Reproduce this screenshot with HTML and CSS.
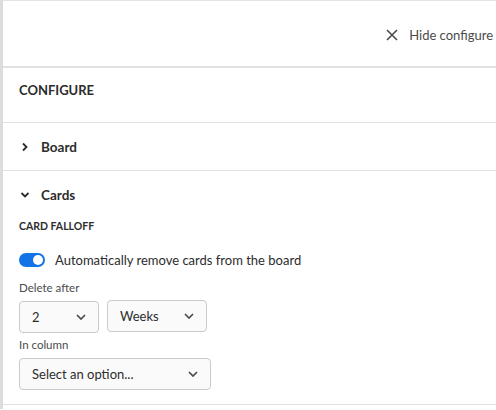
FILE: index.html
```html
<!DOCTYPE html>
<html>
<head>
<meta charset="utf-8">
<link rel="stylesheet" href="styles.css">
</head>
<body>
<div class="panel">
  <div class="header">
    <button class="hide-btn">
      <svg class="x-icon" width="12" height="12" viewBox="0 0 12 12"><path d="M1 1 L11 11 M11 1 L1 11" stroke="#4b4b4b" stroke-width="1.6" fill="none"/></svg>
      <span>Hide configure</span>
    </button>
  </div>
  <div class="title-row">CONFIGURE</div>
  <div class="section">
    <div class="section-head">
      <svg class="chev" width="10" height="10" viewBox="0 0 10 10"><path d="M3 1.5 L6.5 5 L3 8.5" stroke="#2c2c2c" stroke-width="1.8" fill="none"/></svg>
      <span>Board</span>
    </div>
  </div>
  <div class="section open">
    <div class="section-head">
      <svg class="chev" width="10" height="10" viewBox="0 0 10 10"><path d="M1.5 3 L5 6.5 L8.5 3" stroke="#2c2c2c" stroke-width="1.8" fill="none"/></svg>
      <span>Cards</span>
    </div>
    <div class="section-body">
      <div class="subhead">CARD FALLOFF</div>
      <label class="switch-row">
        <span class="switch"><span class="knob"></span></span>
        <span>Automatically remove cards from the board</span>
      </label>
      <div class="field-label">Delete after</div>
      <div class="select-row">
        <div class="select s-num"><span>2</span><svg width="10" height="6" viewBox="0 0 10 6"><path d="M1 1 L5 5 L9 1" stroke="#4b4b4b" stroke-width="1.7" fill="none"/></svg></div>
        <div class="select s-unit"><span>Weeks</span><svg width="10" height="6" viewBox="0 0 10 6"><path d="M1 1 L5 5 L9 1" stroke="#4b4b4b" stroke-width="1.7" fill="none"/></svg></div>
      </div>
      <div class="field-label tight">In column</div>
      <div class="select s-col"><span>Select an option...</span><svg width="10" height="6" viewBox="0 0 10 6"><path d="M1 1 L5 5 L9 1" stroke="#4b4b4b" stroke-width="1.7" fill="none"/></svg></div>
    </div>
  </div>
</div>
</body>
</html>
```
FILE: styles.css
```css
html, body {
  margin: 0;
  padding: 0;
  background: #ffffff;
}
body {
  font-family: Lato, "Liberation Sans", sans-serif;
  color: #2c2c2c;
  width: 496px;
  height: 410px;
  overflow: hidden;
}
.panel {
  border-top: 1px solid #e3e3e3;
  border-left: 3px solid #dcdcdc;
  height: 409px;
  box-sizing: border-box;
  overflow: hidden;
}
.header {
  height: 65px;
  border-bottom: 2px solid #e1e1e1;
  display: flex;
  justify-content: flex-end;
  align-items: center;
}
.hide-btn {
  display: flex;
  align-items: center;
  gap: 11px;
  background: none;
  border: none;
  padding: 0;
  margin-right: 3px;
  margin-top: 2px;
  font-family: inherit;
  font-size: 13px;
  color: #4b4b4b;
  white-space: nowrap;
}
.title-row {
  height: 55px;
  box-sizing: border-box;
  border-bottom: 1px solid #e1e1e1;
  padding-left: 16px;
  padding-top: 14px;
  font-size: 13px;
  font-weight: 700;
  color: #2c2c2c;
}
.section {
  border-bottom: 1px solid #e1e1e1;
}
.section-head {
  height: 47px;
  display: flex;
  align-items: center;
  padding-left: 17px;
  gap: 11px;
  font-size: 13.5px;
  font-weight: 700;
}
.open .section-head {
  height: 48px;
}
.section-body {
  padding: 0 0 14px 16px;
}
.subhead {
  font-size: 10.5px;
  font-weight: 700;
  line-height: 14px;
}
.switch-row {
  display: flex;
  align-items: center;
  gap: 10px;
  margin-top: 18px;
  font-size: 13px;
  color: #2c2c2c;
  height: 18px;
}
.switch {
  width: 26px;
  height: 14px;
  border-radius: 7px;
  background: #1473e6;
  position: relative;
  flex: none;
}
.knob {
  position: absolute;
  right: 2px;
  top: 2px;
  width: 10px;
  height: 10px;
  border-radius: 50%;
  background: #fff;
}
.field-label {
  font-size: 11.5px;
  color: #4b4b4b;
  line-height: 16px;
  margin-top: 11px;
}
.field-label.tight {
  margin-top: 4px;
}
.select-row {
  display: flex;
  gap: 8px;
  margin-top: 5px;
}
.select {
  height: 32px;
  box-sizing: border-box;
  border: 1px solid #cacaca;
  border-radius: 4px;
  background: #fafafa;
  display: flex;
  align-items: center;
  justify-content: space-between;
  padding: 0 12px 0 12px;
  font-size: 13px;
  color: #2c2c2c;
}
.s-num { width: 80px; }
.s-unit { width: 100px; margin-top: -1px; }
.s-col { width: 192px; margin-top: 5px; }
```
